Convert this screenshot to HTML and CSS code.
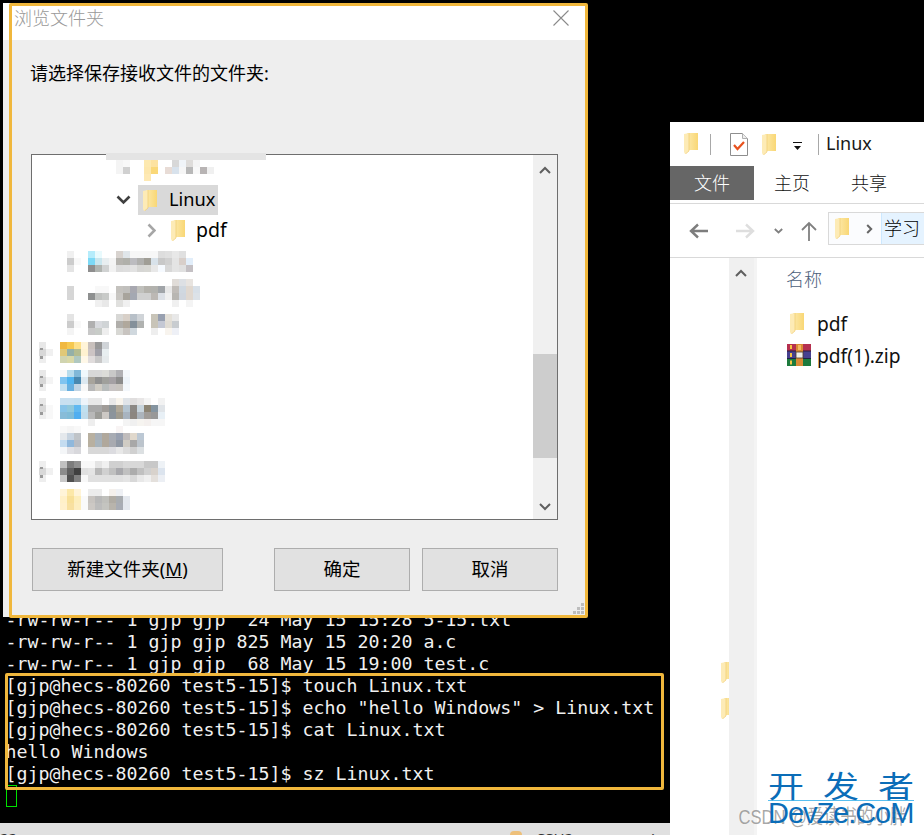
FILE: index.html
```html
<!DOCTYPE html>
<html lang="zh">
<head>
<meta charset="utf-8">
<title>Browse folder</title>
<link rel="stylesheet" href="styles.css">
</head>
<body>
<main class="desktop">

  <section class="terminal">
    <div class="term-body">
      <div class="term-line">-rw-rw-r-- 1 gjp gjp  24 May 15 15:28 5-15.txt</div>
      <div class="term-line">-rw-rw-r-- 1 gjp gjp 825 May 15 20:20 a.c</div>
      <div class="term-line">-rw-rw-r-- 1 gjp gjp  68 May 15 19:00 test.c</div>
      <div class="term-line">[gjp@hecs-80260 test5-15]$ touch Linux.txt</div>
      <div class="term-line">[gjp@hecs-80260 test5-15]$ echo "hello Windows" &gt; Linux.txt</div>
      <div class="term-line">[gjp@hecs-80260 test5-15]$ cat Linux.txt</div>
      <div class="term-line">hello Windows</div>
      <div class="term-line">[gjp@hecs-80260 test5-15]$ sz Linux.txt</div>
      <div class="term-line"><span class="term-cursor"></span></div>
    </div>
    <div class="statusbar">
      <span class="status-num">22</span>
      <span class="status-lock"></span>
      <span class="status-ssh">SSH2</span>
      <span class="status-dot">.</span>
    </div>
    <div class="term-highlight"></div>
  </section>

  <section class="explorer">
    <div class="qat">
      <svg class="folder-ic qat-folder" viewBox="0 0 14 21"><use href="#folder"/></svg>
      <span class="qat-sep"></span>
      <svg class="qat-check" viewBox="0 0 18 23">
        <path d="M.5.5h12l5 5v17H.5z" fill="#fff" stroke="#8e8e8e"/>
        <path d="M12.5.5v5h5" fill="#eee" stroke="#b0b0b0"/>
        <path d="M4 12l3.5 4L14 9" fill="none" stroke="#e8521e" stroke-width="2.2"/>
      </svg>
      <svg class="folder-ic qat-folder2" viewBox="0 0 14 21"><use href="#folder"/></svg>
      <svg class="qat-drop" viewBox="0 0 9 9"><path d="M0 .5h9" stroke="#111"/><path d="M1 4h7L4.500 8z" fill="#111"/></svg>
      <span class="qat-sep qat-sep2"></span>
      <span class="qat-title">Linux</span>
    </div>
    <div class="ribbon">
      <span class="tab tab-file">文件</span>
      <span class="tab tab-home">主页</span>
      <span class="tab tab-share">共享</span>
    </div>
    <div class="navbar">
      <svg class="nav-ic nav-back" viewBox="0 0 20 16"><path d="M19 8H2M9 1.500L2 8l7 6.500" fill="none" stroke="#7d7d7d" stroke-width="2.400"/></svg>
      <svg class="nav-ic nav-fwd" viewBox="0 0 20 16"><path d="M1 8h17M11 1.500L18 8l-7 6.500" fill="none" stroke="#dedede" stroke-width="2.400"/></svg>
      <svg class="nav-chev" viewBox="0 0 9 6"><path d="M.8 1l3.700 3.500L8.200 1" fill="none" stroke="#808080" stroke-width="1.800"/></svg>
      <svg class="nav-up" viewBox="0 0 16 20"><path d="M8 20V2M1 9l7-7 7 7" fill="none" stroke="#808080" stroke-width="1.800"/></svg>
      <div class="address">
        <div class="addr-home">
          <svg class="folder-ic addr-folder" viewBox="0 0 14 21"><use href="#folder"/></svg>
          <svg class="addr-chev" viewBox="0 0 7 10"><path d="M1.200 1l4 4-4 4" fill="none" stroke="#666" stroke-width="2"/></svg>
        </div>
        <div class="addr-crumb">学习</div>
      </div>
    </div>
    <div class="ex-main">
      <aside class="ex-nav">
        <svg class="folder-ic nav-stub nav-stub1" viewBox="0 0 14 21"><use href="#folder"/></svg>
        <svg class="folder-ic nav-stub nav-stub2" viewBox="0 0 14 21"><use href="#folder"/></svg>
      </aside>
      <div class="ex-scroll">
        <svg class="ex-up" viewBox="0 0 12 8"><path d="M1 7l5-5 5 5" fill="none" stroke="#5f5f5f" stroke-width="2"/></svg>
      </div>
      <div class="ex-list">
        <div class="col-head">名称</div>
        <div class="file-row file-first">
          <svg class="folder-ic file-folder" viewBox="0 0 14 21"><use href="#folder"/></svg>
          <span>pdf</span>
        </div>
        <div class="file-row">
          <svg class="zip" viewBox="0 0 24 22">
            <rect y="0" width="24" height="7" fill="#b5304f"/>
            <rect y="7" width="24" height="7.500" fill="#47408f"/>
            <rect y="14.500" width="24" height="7.500" fill="#1d7a3d"/>
            <rect x="0" y="6.500" width="24" height="1" fill="#2a1d3a"/>
            <rect x="0" y="14" width="24" height="1" fill="#1e2440"/>
            <rect x="3" y="1" width="2" height="4" fill="#f5c542"/>
            <rect x="3" y="9" width="2" height="4" fill="#f5c542"/>
            <rect x="3" y="16.500" width="2" height="4" fill="#f5c542"/>
            <rect x="9" y="0" width="7" height="22" fill="#d98a35"/>
            <rect x="9" y="8" width="7" height="6" fill="#f2efe8" stroke="#4b3a2a" stroke-width=".8"/>
            <rect x="11" y="1" width="3" height="5" fill="#f4b860"/>
          </svg>
          <span>pdf(1).zip</span>
        </div>
      </div>
    </div>
  </section>

  <section class="dialog">
    <header class="dlg-title">
      <span class="dlg-title-text">浏览文件夹</span>
      <svg class="dlg-close" viewBox="0 0 16 16"><path d="M.5.500l15 15M15.500.500l-15 15" stroke="#8a8a8a" stroke-width="1.100"/></svg>
    </header>
    <div class="dlg-body">
      <p class="dlg-prompt">请选择保存接收文件的文件夹:</p>
      <div class="tree">
        <div class="tree-view">
          <div class="tree-row"></div>
          <div class="tree-row tree-linux">
            <svg class="tree-open" viewBox="0 0 15 10"><path d="M1.500 1.500l6 6 6-6" fill="none" stroke="#404040" stroke-width="2.600"/></svg>
            <div class="tree-sel">
              <svg class="folder-ic" viewBox="0 0 14 21"><use href="#folder"/></svg>
              <span class="tree-label">Linux</span>
            </div>
          </div>
          <div class="tree-row tree-pdf">
            <svg class="tree-closed" viewBox="0 0 9 15"><path d="M1.500 1.500l6 6-6 6" fill="none" stroke="#a6a6a6" stroke-width="2.600"/></svg>
            <svg class="folder-ic tree-pdf-folder" viewBox="0 0 14 21"><use href="#folder"/></svg>
            <span class="tree-label tree-pdf-label">pdf</span>
          </div>
        </div>
        <div class="tree-scroll">
          <svg class="ts-arrow" viewBox="0 0 12 8"><path d="M1 7l5-5 5 5" fill="none" stroke="#5f5f5f" stroke-width="2"/></svg>
          <div class="ts-track"><div class="ts-thumb"></div></div>
          <svg class="ts-arrow" viewBox="0 0 12 8"><path d="M1 1l5 5 5-5" fill="none" stroke="#5f5f5f" stroke-width="2"/></svg>
        </div>
        <div class="tree-cover"></div>
        <svg class="mosaic" viewBox="0 0 26 51" aria-hidden="true">
          <!-- top row -->
          <rect x="11" y="0" fill="#f4f4f4"/><rect x="12" y="0" fill="#f8f8f8"/><rect x="15" y="0" fill="#fde9b0"/><rect x="16" y="0" fill="#fde2a0"/><rect x="19" y="0" fill="#d8d8d8"/><rect x="20" y="0" fill="#f0f4f8"/><rect x="21" y="0" fill="#dedcda"/><rect x="22" y="0" fill="#f4f4f4"/>
          <rect x="11" y="1" fill="#f4f4f4"/><rect x="12" y="1" fill="#d0d0d0"/><rect x="15" y="1" fill="#fde7ad"/><rect x="16" y="1" fill="#fad878"/><rect x="18" y="1" fill="#e8dcd6"/><rect x="19" y="1" fill="#d8e2ec"/><rect x="20" y="1" fill="#f6f6f6"/><rect x="21" y="1" fill="#b8b8b8"/><rect x="22" y="1" fill="#f8f8f8"/><rect x="23" y="1" fill="#b8b4b4"/><rect x="24" y="1" fill="#f0f0f0"/>
          <rect x="15" y="2" fill="#fee9b4"/>
          <!-- row A -->
          <rect x="4" y="13" fill="#f0f0f0"/><rect x="7" y="13" fill="#b5ecfb"/><rect x="8" y="13" fill="#e8fafd"/><rect x="11" y="13" fill="#d8d3cf"/><rect x="12" y="13" fill="#e0e6ea"/><rect x="13" y="13" fill="#f7f7f7"/><rect x="14" y="13" fill="#f7f7f7"/><rect x="15" y="13" fill="#f7f7f7"/><rect x="16" y="13" fill="#f7f7f7"/><rect x="17" y="13" fill="#ddd"/><rect x="18" y="13" fill="#e0e0e0"/><rect x="19" y="13" fill="#e8e8e8"/><rect x="20" y="13" fill="#e0e0e0"/>
          <rect x="4" y="14" fill="#ccc"/><rect x="5" y="14" fill="#f8f8f8"/><rect x="7" y="14" fill="#7cd9f6"/><rect x="8" y="14" fill="#c9e6ee"/><rect x="9" y="14" fill="#e8eef0"/><rect x="10" y="14" fill="#f4f4f4"/><rect x="11" y="14" fill="#b5b3ae"/><rect x="12" y="14" fill="#b0b0aa"/><rect x="13" y="14" fill="#bcbcc0"/><rect x="14" y="14" fill="#b0b0ae"/><rect x="15" y="14" fill="#a09e96"/><rect x="16" y="14" fill="#d8e2ea"/><rect x="17" y="14" fill="#c8c8c8"/><rect x="18" y="14" fill="#d0d0d0"/><rect x="19" y="14" fill="#e4e4e4"/><rect x="20" y="14" fill="#d8cfca"/><rect x="21" y="14" fill="#e2eefa"/>
          <rect x="4" y="15" fill="#e4e4e4"/><rect x="7" y="15" fill="#8e8e8e"/><rect x="8" y="15" fill="#b0b4b0"/><rect x="9" y="15" fill="#d0d2d2"/><rect x="10" y="15" fill="#f2f2f2"/><rect x="11" y="15" fill="#dcdcdc"/><rect x="12" y="15" fill="#dedede"/><rect x="13" y="15" fill="#e2e2e2"/><rect x="14" y="15" fill="#d6d6d4"/><rect x="15" y="15" fill="#d8d8d4"/><rect x="16" y="15" fill="#e8e8e8"/><rect x="17" y="15" fill="#f6faff"/><rect x="18" y="15" fill="#d8d8d8"/><rect x="19" y="15" fill="#e4e4e4"/><rect x="20" y="15" fill="#e0e0e0"/><rect x="21" y="15" fill="#c4c0c4"/>
          <!-- row B -->
          <rect x="19" y="17" fill="#e0dcd8"/><rect x="20" y="17" fill="#dde0e4"/><rect x="21" y="17" fill="#e8e4e0"/>
          <rect x="4" y="18" fill="#d6d6d6"/><rect x="8" y="18" fill="#f8f8f8"/><rect x="9" y="18" fill="#f8f8f8"/><rect x="11" y="18" fill="#c4c2be"/><rect x="12" y="18" fill="#c0bfbc"/><rect x="13" y="18" fill="#a8a8b0"/><rect x="14" y="18" fill="#c0c0bc"/><rect x="15" y="18" fill="#b4b2ac"/><rect x="16" y="18" fill="#b2b2ae"/><rect x="17" y="18" fill="#a0a4a8"/><rect x="18" y="18" fill="#e8e8e8"/><rect x="19" y="18" fill="#c0bcb8"/><rect x="20" y="18" fill="#d0d8e0"/><rect x="21" y="18" fill="#e0d8d0"/><rect x="22" y="18" fill="#d8e0e8"/>
          <rect x="4" y="19" fill="#d6d6d6"/><rect x="7" y="19" fill="#8e9090"/><rect x="8" y="19" fill="#c0c2c0"/><rect x="9" y="19" fill="#c8cac8"/><rect x="10" y="19" fill="#f8f8f8"/><rect x="11" y="19" fill="#c8c6c2"/><rect x="12" y="19" fill="#a8a49c"/><rect x="13" y="19" fill="#a4a8b2"/><rect x="14" y="19" fill="#d0d0d0"/><rect x="15" y="19" fill="#d0d0d0"/><rect x="16" y="19" fill="#bcb8b4"/><rect x="17" y="19" fill="#dce0e6"/><rect x="18" y="19" fill="#f0f0f0"/><rect x="19" y="19" fill="#b8b6b2"/><rect x="20" y="19" fill="#d0d6de"/><rect x="21" y="19" fill="#e0d8d0"/><rect x="22" y="19" fill="#dce2e8"/>
          <rect x="8" y="20" fill="#f0f0f0"/><rect x="9" y="20" fill="#e8e8e8"/><rect x="11" y="20" fill="#e0e0de"/><rect x="12" y="20" fill="#f0f0f0"/><rect x="19" y="20" fill="#f0f0f0"/><rect x="21" y="20" fill="#f4f4f4"/>
          <!-- row C -->
          <rect x="4" y="22" fill="#e4e4e4"/><rect x="11" y="22" fill="#d8d8d6"/><rect x="12" y="22" fill="#d8d0c8"/><rect x="13" y="22" fill="#b8c0c8"/><rect x="14" y="22" fill="#d0d4d8"/><rect x="16" y="22" fill="#c8c4b8"/><rect x="17" y="22" fill="#98a0b0"/><rect x="18" y="22" fill="#e4e0d8"/><rect x="19" y="22" fill="#e8e8e8"/>
          <rect x="4" y="23" fill="#ccc"/><rect x="5" y="23" fill="#f8f8f8"/><rect x="7" y="23" fill="#b0b0b0"/><rect x="8" y="23" fill="#d8dade"/><rect x="9" y="23" fill="#d0d4d6"/><rect x="11" y="23" fill="#b0aeaa"/><rect x="12" y="23" fill="#b0a89c"/><rect x="13" y="23" fill="#84909a"/><rect x="14" y="23" fill="#b0b2b0"/><rect x="16" y="23" fill="#c8c4b8"/><rect x="17" y="23" fill="#c4c8d4"/><rect x="18" y="23" fill="#e0dcd4"/><rect x="19" y="23" fill="#c8ccd0"/>
          <rect x="4" y="24" fill="#f4f4f4"/><rect x="7" y="24" fill="#c8c8c8"/><rect x="8" y="24" fill="#c8ccc8"/><rect x="9" y="24" fill="#eee"/><rect x="11" y="24" fill="#d8d8d4"/><rect x="12" y="24" fill="#c8c4c0"/><rect x="13" y="24" fill="#d0d8de"/><rect x="16" y="24" fill="#eee"/><rect x="18" y="24" fill="#f8f4ee"/><rect x="19" y="24" fill="#eef0f6"/>
          <!-- row D -->
          <rect x="0" y="26" fill="#e8e8e8"/><rect x="3" y="26" fill="#f0b840"/><rect x="4" y="26" fill="#f5c850"/><rect x="5" y="26" fill="#fde08a"/><rect x="6" y="26" fill="#fff4d8"/><rect x="7" y="26" fill="#c8c0bc"/><rect x="8" y="26" fill="#989898"/><rect x="9" y="26" fill="#d0d4d8"/>
          <rect x="0" y="27" fill="#d8d8d8"/><rect x="1" y="27" fill="#f0f0f0"/><rect x="3" y="27" fill="#e0c878"/><rect x="4" y="27" fill="#94b0a8"/><rect x="5" y="27" fill="#b4bc90"/><rect x="6" y="27" fill="#fff2d0"/><rect x="7" y="27" fill="#ccc4c4"/><rect x="8" y="27" fill="#a0a0a8"/><rect x="9" y="27" fill="#e8eef0"/>
          <rect x="0" y="28" fill="#eee"/><rect x="3" y="28" fill="#d0d4b0"/><rect x="4" y="28" fill="#d8d8a8"/><rect x="5" y="28" fill="#b0c8c0"/><rect x="6" y="28" fill="#fff8e8"/><rect x="7" y="28" fill="#e0dcdc"/><rect x="8" y="28" fill="#c8c8c8"/><rect x="9" y="28" fill="#e6eaec"/>
          <!-- row E -->
          <rect x="0" y="30" fill="#e8e8e8"/><rect x="3" y="30" fill="#f8f8f8"/><rect x="4" y="30" fill="#b8dcec"/><rect x="5" y="30" fill="#80b8d8"/><rect x="6" y="30" fill="#f0f8fc"/><rect x="7" y="30" fill="#d8d8d8"/><rect x="8" y="30" fill="#d8d8d8"/><rect x="9" y="30" fill="#dcdcd8"/><rect x="10" y="30" fill="#c8c8c8"/><rect x="11" y="30" fill="#b0b0b4"/><rect x="12" y="30" fill="#f4f8fc"/>
          <rect x="0" y="31" fill="#d8d8d8"/><rect x="1" y="31" fill="#f4f4f4"/><rect x="3" y="31" fill="#80c4f0"/><rect x="4" y="31" fill="#50b4f0"/><rect x="5" y="31" fill="#4888b0"/><rect x="6" y="31" fill="#dce8f0"/><rect x="7" y="31" fill="#a8a49c"/><rect x="8" y="31" fill="#909090"/><rect x="9" y="31" fill="#a0a09c"/><rect x="10" y="31" fill="#a4a0a4"/><rect x="11" y="31" fill="#8c8c8c"/><rect x="12" y="31" fill="#eef4fa"/>
          <rect x="0" y="32" fill="#eee"/><rect x="3" y="32" fill="#c4e0f0"/><rect x="4" y="32" fill="#68b0e0"/><rect x="5" y="32" fill="#c0d4e4"/><rect x="6" y="32" fill="#f8f8f8"/><rect x="7" y="32" fill="#b8b8b8"/><rect x="8" y="32" fill="#d0ccc4"/><rect x="9" y="32" fill="#b8bcbc"/><rect x="10" y="32" fill="#c8c4c4"/><rect x="11" y="32" fill="#c8c4c0"/><rect x="12" y="32" fill="#f4f8fc"/>
          <!-- row F -->
          <rect x="0" y="34" fill="#e8e8e8"/><rect x="3" y="34" fill="#c8e0f0"/><rect x="4" y="34" fill="#c8e0f0"/><rect x="5" y="34" fill="#c4dff0"/><rect x="6" y="34" fill="#eef4fa"/><rect x="7" y="34" fill="#e8e8e8"/><rect x="8" y="34" fill="#e8e8e8"/><rect x="10" y="34" fill="#e8e8e8"/><rect x="11" y="34" fill="#f8f4ec"/><rect x="12" y="34" fill="#e0e4e8"/><rect x="13" y="34" fill="#e0dede"/><rect x="14" y="34" fill="#e8e6e6"/><rect x="15" y="34" fill="#f4f4f4"/><rect x="17" y="34" fill="#f2f2f2"/>
          <rect x="0" y="35" fill="#d8d8d8"/><rect x="1" y="35" fill="#f8f8f8"/><rect x="3" y="35" fill="#88c4e8"/><rect x="4" y="35" fill="#90c8dc"/><rect x="5" y="35" fill="#60b8f0"/><rect x="6" y="35" fill="#c0e0f0"/><rect x="7" y="35" fill="#a8a8a8"/><rect x="8" y="35" fill="#a8a8a8"/><rect x="9" y="35" fill="#a09c98"/><rect x="10" y="35" fill="#8c9498"/><rect x="11" y="35" fill="#b0a898"/><rect x="12" y="35" fill="#b4c4d0"/><rect x="13" y="35" fill="#8c8884"/><rect x="14" y="35" fill="#c8d4dc"/><rect x="15" y="35" fill="#8c8474"/><rect x="16" y="35" fill="#8494a0"/><rect x="17" y="35" fill="#e0e4e8"/>
          <rect x="0" y="36" fill="#eee"/><rect x="1" y="36" fill="#f8f8f8"/><rect x="3" y="36" fill="#88bcd8"/><rect x="4" y="36" fill="#80bcd8"/><rect x="5" y="36" fill="#50aef0"/><rect x="6" y="36" fill="#c0dcec"/><rect x="7" y="36" fill="#b8b8b8"/><rect x="8" y="36" fill="#9c9c98"/><rect x="9" y="36" fill="#ccc8c4"/><rect x="10" y="36" fill="#8c949c"/><rect x="11" y="36" fill="#a09c90"/><rect x="12" y="36" fill="#a8b4c0"/><rect x="13" y="36" fill="#8c8680"/><rect x="14" y="36" fill="#acb4bc"/><rect x="15" y="36" fill="#a09c98"/><rect x="16" y="36" fill="#989898"/><rect x="17" y="36" fill="#e8f0f6"/>
          <rect x="7" y="37" fill="#eee"/><rect x="12" y="37" fill="#f4f4f4"/><rect x="13" y="37" fill="#f0f0f0"/><rect x="14" y="37" fill="#f6f4f0"/><rect x="15" y="37" fill="#f4f0ee"/><rect x="16" y="37" fill="#f6f6f6"/><rect x="17" y="37" fill="#f6f6f6"/>
          <!-- row G -->
          <rect x="3" y="38" fill="#f8f8f8"/><rect x="4" y="38" fill="#f4f4f4"/><rect x="5" y="38" fill="#f8f8f8"/><rect x="11" y="38" fill="#f8f4f4"/>
          <rect x="3" y="39" fill="#e4e8ec"/><rect x="4" y="39" fill="#c8d4e0"/><rect x="5" y="39" fill="#c0c4c8"/><rect x="7" y="39" fill="#b8b0a0"/><rect x="8" y="39" fill="#a8b0b8"/><rect x="9" y="39" fill="#b0a89c"/><rect x="10" y="39" fill="#a8acb4"/><rect x="11" y="39" fill="#98a0b0"/><rect x="12" y="39" fill="#c0bcbc"/><rect x="13" y="39" fill="#e0d8cc"/><rect x="14" y="39" fill="#bcc8d4"/>
          <rect x="3" y="40" fill="#c4dcf0"/><rect x="4" y="40" fill="#90b8dc"/><rect x="5" y="40" fill="#b8bcc4"/><rect x="7" y="40" fill="#b8b0a0"/><rect x="8" y="40" fill="#a8b4bc"/><rect x="9" y="40" fill="#b0a89c"/><rect x="10" y="40" fill="#a8aab0"/><rect x="11" y="40" fill="#9098a4"/><rect x="12" y="40" fill="#d0ccc4"/><rect x="13" y="40" fill="#a8a8a8"/><rect x="14" y="40" fill="#bcc4cc"/>
          <rect x="3" y="41" fill="#f4f6f8"/><rect x="4" y="41" fill="#e0e0e4"/><rect x="5" y="41" fill="#d8d8dc"/><rect x="7" y="41" fill="#d8d8d8"/><rect x="8" y="41" fill="#d8d8d8"/><rect x="9" y="41" fill="#d8d8d8"/><rect x="10" y="41" fill="#dcdce0"/><rect x="11" y="41" fill="#e8e8e8"/><rect x="12" y="41" fill="#dcdcdc"/><rect x="13" y="41" fill="#d0d0d0"/><rect x="14" y="41" fill="#dce0e2"/>
          <!-- row H -->
          <rect x="0" y="43" fill="#eee"/><rect x="3" y="43" fill="#c0c0c0"/><rect x="4" y="43" fill="#7c7c7c"/><rect x="5" y="43" fill="#909090"/><rect x="6" y="43" fill="#f8f8f8"/><rect x="7" y="43" fill="#f8f8f8"/><rect x="8" y="43" fill="#e4e4e4"/><rect x="9" y="43" fill="#f0f0f0"/><rect x="10" y="43" fill="#d0d0d0"/><rect x="11" y="43" fill="#d0d0d0"/><rect x="12" y="43" fill="#d8d8d8"/><rect x="13" y="43" fill="#d8d8d8"/><rect x="14" y="43" fill="#d8d8d8"/><rect x="15" y="43" fill="#c8c8c8"/><rect x="16" y="43" fill="#c8c8c8"/><rect x="17" y="43" fill="#eef2f6"/>
          <rect x="0" y="44" fill="#d8d8d8"/><rect x="1" y="44" fill="#f0f0f0"/><rect x="3" y="44" fill="#8c8c8c"/><rect x="4" y="44" fill="#606060"/><rect x="5" y="44" fill="#404040"/><rect x="6" y="44" fill="#e0e0e0"/><rect x="7" y="44" fill="#e4e4e4"/><rect x="8" y="44" fill="#b8b8b8"/><rect x="9" y="44" fill="#d0d0d0"/><rect x="10" y="44" fill="#c0c0c0"/><rect x="11" y="44" fill="#a8a8ac"/><rect x="12" y="44" fill="#c0c0c0"/><rect x="13" y="44" fill="#acacac"/><rect x="14" y="44" fill="#c0c0c0"/><rect x="15" y="44" fill="#d0d0d0"/><rect x="16" y="44" fill="#d8d2cc"/><rect x="17" y="44" fill="#dce4ee"/>
          <rect x="0" y="45" fill="#eee"/><rect x="3" y="45" fill="#c8c8c8"/><rect x="4" y="45" fill="#505050"/><rect x="5" y="45" fill="#808080"/><rect x="6" y="45" fill="#f8f8f8"/><rect x="7" y="45" fill="#e0e0e0"/><rect x="8" y="45" fill="#e0e0e0"/><rect x="9" y="45" fill="#e0e0e0"/><rect x="10" y="45" fill="#e0e0e0"/><rect x="11" y="45" fill="#e0e0e0"/><rect x="12" y="45" fill="#e4e4e4"/><rect x="13" y="45" fill="#d8d8d8"/><rect x="14" y="45" fill="#e8e8e8"/><rect x="15" y="45" fill="#f0f0f0"/><rect x="16" y="45" fill="#e4e0dc"/><rect x="17" y="45" fill="#eceff4"/>
          <!-- row I -->
          <rect x="3" y="47" fill="#fff4d8"/><rect x="4" y="47" fill="#fce8a8"/><rect x="5" y="47" fill="#fff4d8"/><rect x="7" y="47" fill="#ececec"/><rect x="8" y="47" fill="#ececec"/><rect x="10" y="47" fill="#f4f0ec"/><rect x="11" y="47" fill="#eef0f4"/>
          <rect x="3" y="48" fill="#fff0c8"/><rect x="4" y="48" fill="#f8e098"/><rect x="5" y="48" fill="#fdeebc"/><rect x="6" y="48" fill="#fafafa"/><rect x="7" y="48" fill="#c8c4c0"/><rect x="8" y="48" fill="#b8b8b8"/><rect x="9" y="48" fill="#c0c0bc"/><rect x="10" y="48" fill="#b0aca4"/><rect x="11" y="48" fill="#a8acb0"/><rect x="12" y="48" fill="#e4e8ee"/>
          <rect x="3" y="49" fill="#fff0cc"/><rect x="4" y="49" fill="#f8e0a0"/><rect x="5" y="49" fill="#fdeec0"/><rect x="6" y="49" fill="#fafafa"/><rect x="7" y="49" fill="#ccc8c4"/><rect x="8" y="49" fill="#bcbcbc"/><rect x="9" y="49" fill="#c4c4c0"/><rect x="10" y="49" fill="#b8b4ac"/><rect x="11" y="49" fill="#a8acb4"/><rect x="12" y="49" fill="#e4e8ee"/>
          <!-- blurred expander arrows -->
          <path fill="#9a9a9a" d="M.1 26.800h.5v.4H.1zM.1 28h.5v.4H.1zM.1 30.800h.5v.4H.1zM.1 32h.5v.4H.1zM.1 34.800h.5v.4H.1zM.1 36h.5v.4H.1zM.1 43.800h.5v.4H.1zM.1 45h.5v.4H.1z"/>
        </svg>
      </div>
      <div class="dlg-actions">
        <button class="btn btn-new" type="button">新建文件夹(<u>M</u>)</button>
        <button class="btn" type="button">确定</button>
        <button class="btn" type="button">取消</button>
      </div>
    </div>
    <svg class="grip" viewBox="0 0 12 12"><path d="M9 0h3v3H9zM5 4h3v3H5zM9 4h3v3H9zM1 8h3v3H1zM5 8h3v3H5zM9 8h3v3H9z" fill="#bdbdbd"/></svg>
    <div class="dlg-outline"></div>
  </section>

  <div class="watermark">
    <div class="wm-csdn">CSDN @爱读书的小胖</div>
    <div class="wm-cn"><span>开</span><span>发</span><span>者</span></div>
    <div class="wm-en">DevZe.CoM</div>
  </div>

  <svg class="defs" width="0" height="0" aria-hidden="true">
    <defs>
      <linearGradient id="fg" x1="0" x2="1" y1="0" y2="0">
        <stop offset="0" stop-color="#fce9ab"/><stop offset="1" stop-color="#f9d775"/>
      </linearGradient>
      <symbol id="folder" viewBox="0 0 14 21">
        <path d="M3 0h11v17H3z" fill="url(#fg)"/>
        <path d="M0 1l5-1v18l-3.500 3H1L0 19z" fill="#fdebb6"/>
        <path d="M5 0v18l-3.500 3" fill="none" stroke="#eec767" stroke-width=".6"/>
      </symbol>
    </defs>
  </svg>
</main>
</body>
</html>
```

FILE: styles.css
```css
* { box-sizing: border-box; }

html, body {
  margin: 0;
  height: 100%;
  overflow: hidden;
  background: #000;
}

.desktop {
  position: relative;
  width: 924px;
  height: 835px;
  overflow: hidden;
  font-family: "Noto Sans", "Noto Sans CJK SC", sans-serif;
  color: #000;
}

.defs { position: absolute; }

.folder-ic { display: block; width: 14px; height: 21px; flex: none; }

/* ---------- terminal ---------- */
.terminal {
  position: absolute;
  left: 0;
  top: 0;
  width: 670px;
  height: 835px;
  display: flex;
  flex-direction: column;
  background: #000;
}

.term-body {
  flex: 1;
  display: flex;
  flex-direction: column;
  justify-content: flex-end;
  padding: 0 0 16px 5.500px;
}

.term-line {
  height: 22px;
  line-height: 22px;
  white-space: pre;
  font-family: "DejaVu Sans Mono", monospace;
  font-size: 18.27px;
  color: #f0f0f0;
}

.term-cursor {
  display: block;
  width: 11px;
  height: 22px;
  border: 1px solid #00e000;
}

.term-highlight {
  position: absolute;
  left: 5px;
  top: 673px;
  width: 659px;
  height: 117px;
  border: 3px solid #f0b73c;
  border-radius: 2px;
}

.statusbar {
  height: 12px;
  flex: none;
  position: relative;
  overflow: hidden;
  background: #e0e0e0;
  font-size: 15px;
  line-height: 20px;
  color: #333;
}

.status-num { position: absolute; left: 0; top: 5px; }
.status-lock { position: absolute; left: 510px; top: 8px; width: 12px; height: 10px; border-radius: 4px 4px 0 0; background: #eec07a; }
.status-ssh { position: absolute; left: 537px; top: 5px; }
.status-dot { position: absolute; left: 651px; top: -3px; }

/* ---------- explorer ---------- */
.explorer {
  position: absolute;
  left: 670px;
  top: 122px;
  width: 254px;
  height: 713px;
  display: flex;
  flex-direction: column;
  background: #fff;
  font-size: 18px;
}

.qat {
  height: 44px;
  flex: none;
  display: flex;
  align-items: center;
  padding-left: 14px;
}

.qat-folder { margin-top: -2px; }
.qat-sep { width: 1px; height: 21px; margin-left: 12px; background: #a8a8a8; }
.qat-check { width: 18px; height: 23px; margin: 1px 0 0 19px; }
.qat-folder2 { margin: 0 0 0 14px; }
.qat-drop { width: 9px; height: 9px; margin: 5px 0 0 17px; }
.qat-sep2 { margin-left: 16px; }
.qat-title { margin: -2px 0 0 7px; font-size: 18px; color: #1a1a1a; line-height: 24px; }

.ribbon {
  height: 38px;
  flex: none;
  display: flex;
  padding-bottom: 4px;
  border-bottom: 1px solid #d9d9d9;
}

.tab { height: 34px; line-height: 34px; text-align: center; font-weight: 300; color: #111; }
.tab-file { width: 84px; background: #666; color: #fff; }
.tab-home { width: 76px; }
.tab-share { width: 78px; }

.navbar {
  height: 54px;
  flex: none;
  display: flex;
  align-items: center;
  padding-left: 19px;
  border-bottom: 1px solid #d9d9d9;
}

.nav-ic { width: 20px; height: 16px; }
.nav-fwd { margin-left: 26px; }
.nav-chev { width: 9px; height: 6px; margin-left: 19px; }
.nav-up { width: 16px; height: 20px; margin-left: 18px; }

.address {
  display: flex;
  align-self: flex-start;
  margin: 8px 0 0 11px;
  flex: 1;
  height: 33px;
  border: 1px solid #d9d9d9;
  border-right: 0;
  overflow: hidden;
}

.addr-home {
  width: 52px;
  flex: none;
  display: flex;
  align-items: center;
  padding-left: 6px;
  background: #fbfcfe;
}

.addr-chev { width: 7px; height: 10px; margin-left: 17px; }

.addr-crumb {
  flex: 1;
  padding-left: 2px;
  line-height: 30px;
  background: #e5f3ff;
  border-left: 1px solid #cce8ff;
  font-weight: 300;
}

.ex-main { flex: 1; display: flex; min-height: 0; }

.ex-nav { width: 59px; flex: none; position: relative; overflow: hidden; }
.nav-stub { position: absolute; left: 51px; }
.nav-stub1 { top: 404px; }
.nav-stub2 { top: 440px; }

.ex-scroll { width: 25px; flex: none; background: #f0f0f0; padding: 11px 0 0 6px; }
.ex-up { display: block; width: 12px; height: 8px; }

.ex-list {
  flex: 1;
  margin-left: 3px;
  padding-left: 29px;
  box-shadow: -3px 0 0 #f4f4f4;
}

.col-head { margin-top: 8px; line-height: 27px; color: #4c607a; font-weight: 300; }

.file-row {
  display: flex;
  align-items: center;
  height: 32px;
  font-size: 19.200px;
  color: #111;
}

.file-first { margin-top: 14px; }
.file-folder { margin: 0 13px 0 4px; }
.zip { display: block; width: 24px; height: 22px; margin: 0 6px 0 1px; }

/* ---------- dialog ---------- */
.dialog {
  position: absolute;
  left: 3px;
  top: 3px;
  width: 582px;
  height: 614px;
  display: flex;
  flex-direction: column;
  background: #eee;
}

.dlg-title {
  height: 37px;
  flex: none;
  display: flex;
  align-items: center;
  justify-content: space-between;
  padding: 0 16px 0 11px;
  background: #fff;
  font-size: 18px;
  font-weight: 300;
  color: #9a9a9a;
  line-height: 30px;
}

.dlg-title-text { margin-top: -7px; }
.dlg-close { width: 16px; height: 16px; margin-top: -7px; }

.dlg-body {
  flex: 1;
  display: flex;
  flex-direction: column;
  padding: 0 27px 0 28px;
}

.dlg-prompt {
  margin: 18px 0 0 -1px;
  height: 96px;
  line-height: 30px;
  font-size: 18px;
  font-weight: 400;
}

.tree {
  position: relative;
  height: 366px;
  flex: none;
  display: flex;
  background: #fff;
  border: 1px solid #6e6e6e;
}

.tree-view { flex: 1; }
.tree-row { height: 30px; display: flex; align-items: center; }
.tree-label { margin-top: -2px; font-size: 18.200px; }
.tree-linux { padding-left: 84px; }
.tree-open { width: 15px; height: 10px; }
.tree-sel {
  width: 80px;
  height: 30px;
  margin-left: 7px;
  padding-left: 5px;
  display: flex;
  align-items: center;
  gap: 12px;
  background: #d9d9d9;
}

.tree-pdf { padding-left: 115px; }
.tree-closed { width: 9px; height: 15px; }
.tree-pdf-folder { margin-left: 15px; }
.tree-pdf-label { margin-left: 11px; font-size: 19.500px; }

.tree-scroll {
  width: 24px;
  flex: none;
  display: flex;
  flex-direction: column;
  align-items: center;
  background: #f0f0f0;
  padding: 11px 0 8px;
}

.ts-arrow { display: block; width: 12px; height: 8px; flex: none; }
.ts-track { flex: 1; align-self: stretch; padding-top: 180px; }
.ts-thumb { height: 104px; background: #cdcdcd; }

.tree-cover {
  position: absolute;
  left: 74px;
  top: -2px;
  width: 160px;
  height: 7px;
  background: #e4e4e4;
}

.mosaic {
  position: absolute;
  left: 7px;
  top: 5px;
  width: 182px;
  height: 357px;
  shape-rendering: crispEdges;
}

.mosaic rect { width: 1px; height: 1px; }

.dlg-actions {
  display: flex;
  margin-top: 28px;
  padding-left: 1px;
  gap: 12px;
}

.btn {
  width: 136px;
  height: 43px;
  padding: 0;
  background: #e1e1e1;
  border: 1.500px solid #adadad;
  border-radius: 0;
  font: 400 18.500px/1 "Noto Sans", "Noto Sans CJK SC", sans-serif;
  color: #000;
}

.btn-new { width: 191px; margin-right: 39px; }

.grip { position: absolute; right: 1px; bottom: 2px; width: 12px; height: 12px; }

.dlg-outline {
  position: absolute;
  left: 6px;
  top: 0;
  right: -3px;
  bottom: -1px;
  border: 3px solid #f0b73c;
  border-radius: 2px;
  pointer-events: none;
}

/* ---------- watermark ---------- */
.watermark {
  position: absolute;
  left: 768px;
  top: 766px;
  width: 146px;
  height: 69px;
  color: #0b6db8;
}

.wm-cn {
  position: relative;
  display: flex;
  justify-content: space-between;
  height: 35px;
  line-height: 36px;
  border-bottom: 1px solid #58bff0;
  font-size: 36px;
  font-weight: 400;
}

.wm-cn span { transform: scaleY(.82); transform-origin: 50% 85%; }

.wm-en {
  position: relative;
  font-family: "Liberation Sans", sans-serif;
  font-size: 29px;
  line-height: 25px;
  letter-spacing: -1.050px;
  white-space: nowrap;
}

.wm-csdn {
  position: absolute;
  right: 7px;
  top: 39px;
  font-family: "Liberation Sans", "Noto Sans CJK SC", sans-serif;
  font-size: 20px;
  line-height: 24px;
  white-space: nowrap;
  color: rgba(110, 110, 110, .6);
  transform: scaleX(.83);
  transform-origin: 100% 50%;
}
```
